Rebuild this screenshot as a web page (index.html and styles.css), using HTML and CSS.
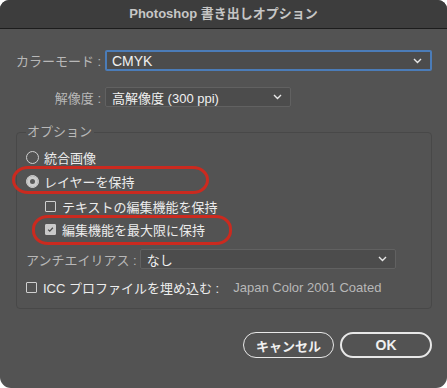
FILE: index.html
```html
<!DOCTYPE html>
<html lang="ja">
<head>
  <meta charset="UTF-8" />
  <title>Photoshop 書き出しオプション</title>
  <link rel="stylesheet" href="styles.css">
</head>
<body>

  <div class="dialog">
    <!-- Title -->
    <div class="titlebar">Photoshop 書き出しオプション</div>

    <div class="content">
      <div class="row">
        <span class="label">カラーモード :</span>
        <div class="select select-focus">
          <span class="value value-big">CMYK</span>
          <svg class="chev" width="9" height="6" viewBox="0 0 9 6"><path d="M1 1 L4.5 4.5 L8 1" fill="none" stroke="#e8e8e8" stroke-width="1.4"/></svg>
        </div>
      </div>

      <div class="row row-res">
        <span class="label">解像度 :</span>
        <div class="select select-res">
          <span class="value">高解像度 (300 ppi)</span>
          <svg class="chev" width="9" height="6" viewBox="0 0 9 6"><path d="M1 1 L4.5 4.5 L8 1" fill="none" stroke="#e8e8e8" stroke-width="1.4"/></svg>
        </div>
      </div>

      <!-- Options -->
      <fieldset class="group">
        <legend>オプション</legend>
        <div class="opt"><span class="radio"></span>統合画像</div>
        <div class="opt opt-2"><span class="radio checked"></span>レイヤーを保持</div>
        <div class="opt sub opt-3"><span class="check"></span>テキストの編集機能を保持</div>
        <div class="opt sub opt-4">
          <span class="check checked">
            <svg width="11" height="11" viewBox="0 0 11 11"><path d="M2.6 5.6 L4.6 7.6 L8.4 3.4" fill="none" stroke="#4a4a4a" stroke-width="1.5"/></svg>
          </span>編集機能を最大限に保持
        </div>
        <div class="opt opt-aa">
          <span class="label-aa">アンチエイリアス :</span>
          <div class="select select-aa">
            <span class="value">なし</span>
            <svg class="chev" width="9" height="6" viewBox="0 0 9 6"><path d="M1 1 L4.5 4.5 L8 1" fill="none" stroke="#e8e8e8" stroke-width="1.4"/></svg>
          </div>
        </div>
        <div class="opt opt-icc">
          <span class="check"></span>
          <span class="icc-label">ICC プロファイルを埋め込む :</span>
          <span class="profile">Japan Color 2001 Coated</span>
        </div>
      </fieldset>

      <div class="buttons">
        <button class="btn">キャンセル</button>
        <button class="btn btn-ok">OK</button>
      </div>
    </div>

    <!-- red markers -->
    <span class="mark mark-layer"></span>
    <span class="mark mark-max"></span>
  </div>

</body>
</html>
```

FILE: styles.css
```css
* {
  margin: 0;
  padding: 0;
  box-sizing: border-box;
}

body {
  background: #ffffff;
  font-family: 'Liberation Sans', 'Noto Sans CJK JP', sans-serif;
  font-size: 13px;
  color: #ececec;
}

.dialog {
  position: relative;
  width: 447px;
  height: 388px;
  background: #535353;
  border-radius: 9px 9px 11px 11px;
  overflow: hidden;
}

/* ========== Title bar ========== */
.titlebar {
  height: 29px;
  background: #3d3d3d;
  border-bottom: 1px solid #1c1c1c;
  color: #c6c6c6;
  font-weight: bold;
  font-size: 13px;
  line-height: 28px;
  text-align: center;
}

.content {
  padding: 21px 15px 0 16px;
}

/* ========== Rows ========== */
.row {
  display: flex;
  align-items: center;
  height: 21px;
}

.row-res {
  margin-top: 16px;
  height: 20px;
}

.label {
  width: 85px;
  text-align: right;
  color: #b8b8b8;
  margin-right: 4px;
  white-space: nowrap;
}

.select {
  display: flex;
  align-items: center;
  justify-content: space-between;
  height: 100%;
  background: #4c4c4c;
  border: 1px solid #616161;
  border-radius: 2px;
  padding: 0 8px 0 6px;
  color: #f0f0f0;
}

.select-focus {
  flex: 1;
  border: 2px solid #4b7cb8;
  padding-left: 5px;
}

.select-res {
  width: 186px;
}

.select-aa {
  width: 256px;
  height: 20px;
}

.value-big {
  font-size: 14px;
}

.chev {
  display: block;
}

/* ========== Options group ========== */
.group {
  margin-top: 17px;
  border: 1px solid #484848;
  border-radius: 4px;
  padding: 7px 10px 11px 9px;
}

.group legend {
  margin-left: 0;
  padding: 0 2px 0 1px;
  line-height: 16px;
  color: #b8b8b8;
}

.opt {
  display: flex;
  align-items: center;
  height: 20px;
  white-space: nowrap;
}

.opt-2 { margin-top: 4px; }
.opt-3 { margin-top: 5px; }
.opt-4 { margin-top: 3px; }
.opt-aa { margin-top: 10px; }
.opt-icc { margin-top: 8px; }

.sub {
  padding-left: 19px;
}

.radio {
  width: 13px;
  height: 13px;
  border: 1px solid #cfcfcf;
  border-radius: 50%;
  margin-right: 5px;
}

.radio.checked {
  background: #cdcdcd;
  border-color: #cdcdcd;
  box-shadow: inset 0 0 0 3px #cdcdcd, inset 0 0 0 6px #5a5a5a;
}

.check {
  width: 11px;
  height: 11px;
  border: 1px solid #cfcfcf;
  border-radius: 1px;
  margin-right: 6px;
}

.check.checked {
  background: #c9c9c9;
  border-color: #c9c9c9;
  display: flex;
  align-items: center;
  justify-content: center;
}

.check.checked svg {
  display: block;
}

.label-aa {
  color: #b8b8b8;
  margin-right: 3px;
}

.icc-label {
  margin-right: 14px;
}

.profile {
  color: #b8b8b8;
}

/* ========== Buttons ========== */
.buttons {
  display: flex;
  justify-content: flex-end;
  gap: 6px;
  margin-top: 23px;
}

.btn {
  width: 91px;
  height: 26px;
  background: transparent;
  border: 1.5px solid #e8e8e8;
  border-radius: 13px;
  color: #f0f0f0;
  font-family: 'Liberation Sans', 'Noto Sans CJK JP', sans-serif;
  font-size: 13px;
  font-weight: bold;
}

.btn-ok {
  width: 92px;
  border-width: 2px;
  font-size: 14px;
}

/* ========== Red markers ========== */
.mark {
  position: absolute;
  border: 3px solid #cb2a1f;
  border-radius: 16px / 14px;
}

.mark-layer {
  left: 12px;
  top: 166px;
  width: 197px;
  height: 28px;
}

.mark-max {
  left: 32px;
  top: 215px;
  width: 200px;
  height: 30px;
}
```
